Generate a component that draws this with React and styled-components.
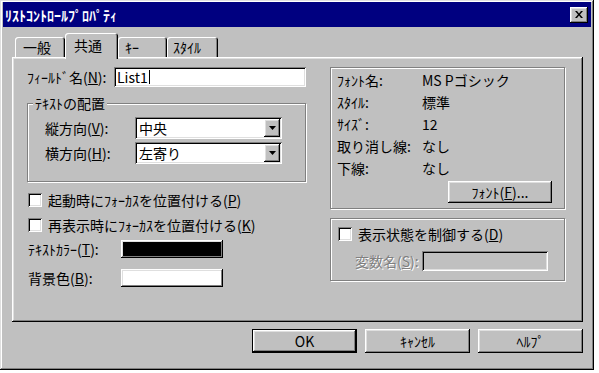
import React from "react";
import styled, { createGlobalStyle, css } from "styled-components";

const GlobalStyle = createGlobalStyle`
  html, body {
    margin: 0;
    padding: 0;
    background: #ffffff;
  }
  body {
    font-family: "Noto Sans CJK JP", "Liberation Sans", sans-serif;
    font-size: 14px;
    color: #000;
  }
  * {
    box-sizing: border-box;
  }
`;

const raised = css`
  box-shadow: inset -1px -1px #000, inset 1px 1px #fff, inset -2px -2px #808080,
    inset 2px 2px #dfdfdf;
`;

const sunken = css`
  box-shadow: inset 1px 1px #808080, inset -1px -1px #fff, inset 2px 2px #000,
    inset -2px -2px #dfdfdf;
`;

const etched = css`
  border: 1px solid #808080;
  box-shadow: inset 1px 1px #fff, 1px 1px #fff;
`;

const Window = styled.div`
  width: 594px;
  height: 370px;
  background: #c0c0c0;
  padding: 2px 3px 3px;
  display: flex;
  flex-direction: column;
  box-shadow: inset -1px -1px #000, inset 1px 1px #dfdfdf, inset -2px -2px #808080,
    inset 2px 2px #fff;
`;

const TitleBar = styled.div`
  height: 25px;
  background: #000080;
  color: #fff;
  display: flex;
  align-items: center;
  justify-content: space-between;
  padding: 0 3px 0 2px;
  font-weight: bold;
  font-size: 14px;
`;

const CloseButton = styled.div`
  width: 18px;
  height: 16px;
  background: #c0c0c0;
  display: flex;
  align-items: center;
  justify-content: center;
  ${raised};
`;

const Body = styled.div`
  flex: 1;
  padding: 6px 8px 0 9px;
  display: flex;
  flex-direction: column;
`;

const TabStrip = styled.div`
  height: 24px;
  display: flex;
  align-items: flex-end;
  padding-left: 3px;
  position: relative;
  z-index: 1;
`;

const Tab = styled.div`
  width: ${(p) => p.$w}px;
  height: ${(p) => (p.$active ? 26 : 20)}px;
  margin-bottom: ${(p) => (p.$active ? -2 : 0)}px;
  padding-left: ${(p) => p.$pad || 8}px;
  padding-top: ${(p) => (p.$active ? 3 : 1)}px;
  background: #c0c0c0;
  border-radius: 3px 3px 0 0;
  white-space: nowrap;
  line-height: 18px;
  box-shadow: inset 1px 1px #fff, inset -1px 0 #000, inset -2px 0 #808080;
`;

const Panel = styled.div`
  height: 265px;
  padding: 10px 15px;
  display: grid;
  grid-template-columns: 279px 235px;
  column-gap: 24px;
  align-items: start;
  ${raised};
`;

const Column = styled.div`
  display: flex;
  flex-direction: column;
`;

const Row = styled.div`
  display: flex;
  align-items: center;
  height: ${(p) => p.$h || 20}px;
  margin-top: ${(p) => p.$mt || 0}px;
  margin-left: ${(p) => p.$ml || 0}px;
  white-space: nowrap;
`;

const Label = styled.span`
  width: ${(p) => p.$w}px;
  flex-shrink: 0;
  white-space: nowrap;
  color: ${(p) => (p.$disabled ? "#808080" : "#000")};
  text-shadow: ${(p) => (p.$disabled ? "1px 1px #fff" : "none")};
`;

const TextBox = styled.div`
  width: ${(p) => p.$w}px;
  height: 20px;
  background: ${(p) => (p.$disabled ? "#c0c0c0" : "#fff")};
  padding: 0 3px;
  display: flex;
  align-items: center;
  ${sunken};
`;

const Caret = styled.span`
  display: inline-block;
  width: 1px;
  height: 14px;
  background: #000;
  margin-left: 1px;
`;

const GroupBox = styled.div`
  position: relative;
  height: ${(p) => p.$h}px;
  margin-top: ${(p) => p.$mt || 0}px;
  padding: ${(p) => p.$pad};
  display: flex;
  flex-direction: column;
  ${etched};
`;

const GroupTitle = styled.span`
  position: absolute;
  top: -10px;
  left: 5px;
  padding: 0 2px;
  background: #c0c0c0;
  line-height: 18px;
`;

const Select = styled.div`
  width: 147px;
  height: 22px;
  background: #fff;
  padding: 2px;
  display: flex;
  align-items: center;
  ${sunken};
`;

const SelectValue = styled.span`
  flex: 1;
  padding-left: 2px;
`;

const ArrowButton = styled.div`
  width: 16px;
  height: 18px;
  background: #c0c0c0;
  display: flex;
  align-items: center;
  justify-content: center;
  ${raised};
`;

const CheckBox = styled.span`
  width: 14px;
  height: 14px;
  flex-shrink: 0;
  background: #fff;
  margin-right: 6px;
  ${sunken};
`;

const Swatch = styled.div`
  width: 102px;
  height: 18px;
  background: ${(p) => p.$color};
  ${raised};
`;

const PushButton = styled.div`
  width: ${(p) => p.$w || 105}px;
  height: ${(p) => p.$h || 24}px;
  background: #c0c0c0;
  display: flex;
  align-items: center;
  justify-content: center;
  white-space: nowrap;
  ${(p) =>
    p.$default
      ? css`
          box-shadow: inset 0 0 0 1px #000, inset -2px -2px #000, inset 2px 2px #fff,
            inset -3px -3px #808080, inset 3px 3px #dfdfdf;
        `
      : raised};
`;

const FontButton = styled(PushButton)`
  align-self: flex-end;
  margin: 2px 12px 0 0;
`;

const ButtonRow = styled.div`
  display: flex;
  justify-content: flex-end;
  gap: 8px;
  margin-top: 7px;
`;

const DownArrow = () => (
  <svg width="7" height="4" viewBox="0 0 7 4">
    <path d="M0 0h7L3.5 4z" fill="#000" />
  </svg>
);

const CloseIcon = () => (
  <svg width="8" height="7" viewBox="0 0 8 7">
    <path d="M0 0h2l2 2.5L6 0h2L5 3.5 8 7H6L4 4.5 2 7H0l3-3.5z" fill="#000" />
  </svg>
);

const fontInfo = [
  ["ﾌｫﾝﾄ名:", "MS Pゴシック"],
  ["ｽﾀｲﾙ:", "標準"],
  ["ｻｲｽﾞ:", "12"],
  ["取り消し線:", "なし"],
  ["下線:", "なし"],
];

export default function App() {
  return (
    <>
      <GlobalStyle />
      <Window>
        <TitleBar>
          <span>ﾘｽﾄｺﾝﾄﾛｰﾙﾌﾟﾛﾊﾟﾃｨ</span>
          <CloseButton>
            <CloseIcon />
          </CloseButton>
        </TitleBar>
        <Body>
          <TabStrip>
            <Tab $w={50}>一般</Tab>
            <Tab $w={53} $active $pad={9}>
              共通
            </Tab>
            <Tab $w={49} $pad={7}>
              ｷｰ
            </Tab>
            <Tab $w={51} $pad={6}>
              ｽﾀｲﾙ
            </Tab>
          </TabStrip>
          <Panel>
            <Column>
              <Row>
                <Label $w={87}>
                  ﾌｨｰﾙﾄﾞ名(<u>N</u>):
                </Label>
                <TextBox $w={192}>
                  List1
                  <Caret />
                </TextBox>
              </Row>
              <GroupBox $h={79} $mt={16} $pad="13px 0 0 17px">
                <GroupTitle>ﾃｷｽﾄの配置</GroupTitle>
                <Row $h={22}>
                  <Label $w={90}>
                    縦方向(<u>V</u>):
                  </Label>
                  <Select>
                    <SelectValue>中央</SelectValue>
                    <ArrowButton>
                      <DownArrow />
                    </ArrowButton>
                  </Select>
                </Row>
                <Row $h={22} $mt={3}>
                  <Label $w={90}>
                    横方向(<u>H</u>):
                  </Label>
                  <Select>
                    <SelectValue>左寄り</SelectValue>
                    <ArrowButton>
                      <DownArrow />
                    </ArrowButton>
                  </Select>
                </Row>
              </GroupBox>
              <Row $h={25} $mt={5} $ml={1}>
                <CheckBox />
                起動時にﾌｫｰｶｽを位置付ける(<u>P</u>)
              </Row>
              <Row $h={25} $ml={1}>
                <CheckBox />
                再表示時にﾌｫｰｶｽを位置付ける(<u>K</u>)
              </Row>
              <Row $h={24} $ml={1}>
                <Label $w={93}>
                  ﾃｷｽﾄｶﾗｰ(<u>T</u>):
                </Label>
                <Swatch $color="#000" />
              </Row>
              <Row $h={24} $mt={5} $ml={1}>
                <Label $w={93}>
                  背景色(<u>B</u>):
                </Label>
                <Swatch $color="#fff" />
              </Row>
            </Column>
            <Column>
              <GroupBox $h={142} $pad="1px 0 0 6px">
                {fontInfo.map(([k, v]) => (
                  <Row key={k} $h={22}>
                    <Label $w={85}>{k}</Label>
                    <span>{v}</span>
                  </Row>
                ))}
                <FontButton $w={104} $h={22}>
                  ﾌｫﾝﾄ(<u>F</u>)...
                </FontButton>
              </GroupBox>
              <GroupBox $h={63} $mt={9} $pad="4px 0 0 7px">
                <Row $h={22}>
                  <CheckBox />
                  表示状態を制御する(<u>D</u>)
                </Row>
                <Row $mt={6} $ml={17}>
                  <Label $w={67} $disabled>
                    変数名(<u>S</u>):
                  </Label>
                  <TextBox $w={126} $disabled />
                </Row>
              </GroupBox>
            </Column>
          </Panel>
          <ButtonRow>
            <PushButton $default>OK</PushButton>
            <PushButton>ｷｬﾝｾﾙ</PushButton>
            <PushButton>ﾍﾙﾌﾟ</PushButton>
          </ButtonRow>
        </Body>
      </Window>
    </>
  );
}
